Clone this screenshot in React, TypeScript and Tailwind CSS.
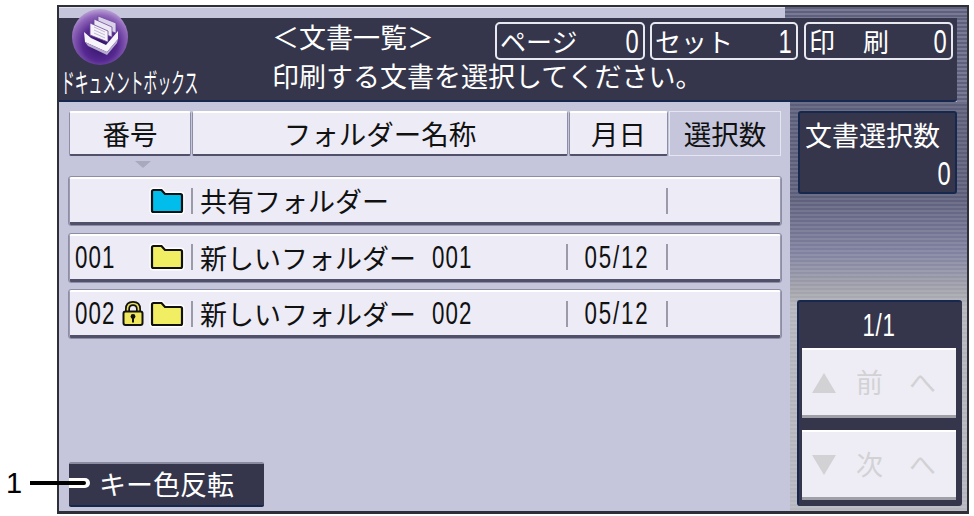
import React from "react";

const jp = "font-['Noto_Sans_CJK_JP','Noto_Sans',sans-serif]";

const BoxIcon = () => (
  <svg width="56" height="56" viewBox="0 0 56 56" className="block">
    <defs>
      <radialGradient id="orb" cx="50%" cy="62%" r="62%">
        <stop offset="0%" stopColor="#2f1266" />
        <stop offset="50%" stopColor="#55288f" />
        <stop offset="82%" stopColor="#8f66ba" />
        <stop offset="100%" stopColor="#bba3d6" />
      </radialGradient>
    </defs>
    <circle cx="28" cy="28" r="28" fill="url(#orb)" />
    <path d="M26 7 L44 14 L44 24 L26 18 Z" fill="#d9d2e8" stroke="#6d4a9c" strokeWidth="0.8" />
    <path d="M22 10 L40 18 L40 28 L22 21 Z" fill="#ece8f4" stroke="#6d4a9c" strokeWidth="0.8" />
    <path d="M18 14 L36 22 L36 33 L18 26 Z" fill="#f6f4fa" stroke="#6d4a9c" strokeWidth="0.8" />
    <path d="M22 18 L33 23 M22 21 L33 26 M22 24 L33 29" stroke="#b5a8cf" strokeWidth="0.8" />
    <path d="M12 23 L19 29 L34 36 L46 22 L46 30 L35 43 L13 33 Z" fill="#f7f5fa" />
    <path d="M13 33 L35 43 L46 30 L45 34 L35 46 L16 37 Z" fill="#b7a9cf" />
  </svg>
);

const Folder = ({ color }: { color: string }) => (
  <svg width="36" height="28" viewBox="0 0 36 28" className="block shrink-0">
    <path d="M2.5 4.5 Q2.5 2.5 4.5 2.5 H12.5 L16 6.5 H31.5 Q33.5 6.5 33.5 8.5 V23.5 Q33.5 25.5 31.5 25.5 H4.5 Q2.5 25.5 2.5 23.5 Z" fill="#fff" stroke="#fff" strokeWidth="4" />
    <path d="M3 4.5 Q3 3 4.5 3 H12.5 L16 7 H31.5 Q33 7 33 8.5 V23.5 Q33 25 31.5 25 H4.5 Q3 25 3 23.5 Z" fill={color} stroke="#111" strokeWidth="2.2" />
  </svg>
);

const Lock = () => (
  <svg width="22" height="25" viewBox="0 0 22 25" className="block">
    <path d="M5.5 11 V8 Q5.5 2.5 11 2.5 Q16.5 2.5 16.5 8 V11" fill="none" stroke="#111" strokeWidth="5" />
    <path d="M5.5 11 V8 Q5.5 2.5 11 2.5 Q16.5 2.5 16.5 8 V11" fill="none" stroke="#e9df55" strokeWidth="1.6" />
    <rect x="1.5" y="10.5" width="19" height="13.5" rx="2" fill="#efe85f" stroke="#111" strokeWidth="2" />
    <circle cx="11" cy="15.5" r="2.4" fill="#111" />
    <rect x="10" y="16" width="2" height="5.5" fill="#111" />
  </svg>
);

const Digits = ({ children, className }: { children: React.ReactNode; className?: string }) => (
  <span className={`inline-block leading-none font-['Liberation_Sans',sans-serif] scale-x-[0.72] ${className ?? ""}`}>{children}</span>
);

const Counter = ({ label, value, w }: { label: React.ReactNode; value: string; w: string }) => (
  <div className={`${w} h-[38px] flex items-center justify-between border-2 border-[#e8e8f0] rounded-[5px] pl-[3px] pr-[2px] text-white text-[26px] leading-none`}>
    {label}
    <Digits className="text-[33px]">{value}</Digits>
  </div>
);

const HeadCell = ({ w, children }: { w: string; children: React.ReactNode }) => (
  <div className={`${w} h-[45px] flex items-center justify-center bg-[#ecebf6] border-t-2 border-t-white border-b-2 border-b-[#50506a] border-x border-x-[#8d8da5] rounded-[2px] text-[27.5px] text-[#111]`}>
    {children}
  </div>
);

const Row = ({ num, lock, color, name, date }: { num?: string; lock?: boolean; color: string; name: string; date?: string }) => (
  <div className="w-[712px] h-[48px] flex items-center bg-[#ecebf6] border-t-2 border-t-white border-b-[3px] border-b-[#50506a] border-x border-x-[#9a9ab0] rounded-[2px] text-[#111] outline outline-1 outline-[#8d8da5]">
    <div className="w-[52px] pl-[5px] shrink-0">
      {num && <Digits className="text-[31px] tracking-[1.5px] origin-left">{num}</Digits>}
    </div>
    <div className="w-[27px] shrink-0">{lock && <Lock />}</div>
    <Folder color={color} />
    <div className="w-[2px] h-[26px] bg-[#9a9aa8] ml-[6px] shrink-0" />
    <div className="w-[373px] pl-[7px] shrink-0 flex items-center text-[27px] leading-none whitespace-nowrap">
      {name}
      {num && <Digits className="text-[31px] tracking-[1.5px] ml-[16px] origin-left">{num}</Digits>}
    </div>
    {date ? <div className="w-[2px] h-[26px] bg-[#9a9aa8] shrink-0" /> : <div className="w-[2px] shrink-0" />}
    <div className="w-[98px] text-center shrink-0">{date && <Digits className="text-[31px] tracking-[2.5px]">{date}</Digits>}</div>
    <div className="w-[2px] h-[26px] bg-[#9a9aa8] shrink-0" />
  </div>
);

const PageButton = ({ dir, label }: { dir: "up" | "down"; label: string }) => (
  <div className="w-[154px] h-[70px] flex items-center justify-between pl-[10px] pr-[20px] bg-[#eeedf6] border-t-2 border-t-white border-b-[3px] border-b-[#a0a0a8] text-[#d2d2d4] text-[27px]">
    <svg width="24" height="20" viewBox="0 0 24 20" className="block">
      <path d={dir === "up" ? "M12 0 L24 20 H0 Z" : "M0 0 H24 L12 20 Z"} fill="#d2d2d4" />
    </svg>
    <span className="-ml-[6px]">{label}</span>
    <span>へ</span>
  </div>
);

export default function App() {
  return (
    <div className={`relative w-[974px] h-[516px] bg-white overflow-hidden pl-[57px] pt-[5px] ${jp}`}>
      <div className="w-[912px] h-[509px] border-2 border-[#2f2f38] border-b-[3px] bg-[#c5c5dc] flex flex-col">
        {/* top strip */}
        <div className="h-[11px] flex shrink-0">
          <div className="w-[726px] border-t border-t-[#e0e0ee]" />
          <div className="flex-1 bg-[repeating-linear-gradient(180deg,#5f617c_0px,#5f617c_2px,#797b96_2px,#797b96_4px)]" />
        </div>

        {/* header */}
        <div className="h-[84px] flex shrink-0">
          <div className="w-[898px] bg-[#35364b] border-b-2 border-b-[#17284f] rounded-br-[3px] relative flex">
            <div className="w-[213px] shrink-0 flex flex-col items-start pl-[13px]">
              <div className="-mt-[9px]"><BoxIcon /></div>
              <span className="text-white text-[27px] leading-none mt-[3px] whitespace-nowrap inline-block origin-left scale-x-[0.51] ml-[-11px]">ドキュメントボックス</span>
            </div>
            <div className="w-[222px] shrink-0 pt-[2px] text-white whitespace-nowrap">
              <div className="text-[27px] leading-[34px]">＜文書一覧＞</div>
              <div className="text-[27px] leading-[36px] mt-[4px]">印刷する文書を選択してください。</div>
            </div>
            <div className="flex gap-[5px] pt-[4px] ml-[1px]">
              <Counter w="w-[150px]" label={<span>ページ</span>} value="0" />
              <Counter w="w-[148px] mr-[1px]" label={<span>セット</span>} value="1" />
              <Counter w="w-[149px]" label={<span className="tracking-[28px] whitespace-nowrap">印刷</span>} value="0" />
            </div>
          </div>
          <div className="flex-1 bg-[repeating-linear-gradient(180deg,#5f617c_0px,#5f617c_2px,#797b96_2px,#797b96_4px)]" />
        </div>

        {/* body */}
        <div className="flex-1 flex min-h-0">
          <div className="w-[731px] shrink-0 pl-[10px] pt-[9px] flex flex-col">
            <div className="flex gap-[1px]">
              <HeadCell w="w-[122px]">番号</HeadCell>
              <HeadCell w="w-[376px]">フォルダー名称</HeadCell>
              <HeadCell w="w-[99px]">月日</HeadCell>
              <div className="w-[112px] h-[45px] flex items-center justify-center bg-[#c5c5dc] border border-[#e6e6f0] text-[27.5px] text-[#111]">選択数</div>
            </div>
            <div className="h-[21px] flex pl-[66px] pt-[5px]">
              <div className="w-0 h-0 border-x-[8px] border-x-transparent border-t-[7px] border-t-[#a9a9bd]" />
            </div>
            <div className="flex flex-col gap-[8.5px]">
              <Row color="#00bdec" name="共有フォルダー" />
              <Row num="001" color="#f1ee64" name="新しいフォルダー" date="05/12" />
              <Row num="002" lock color="#f1ee64" name="新しいフォルダー" date="05/12" />
            </div>
            <div className="mt-auto mb-[4px] w-[195px] h-[45px] flex items-center justify-center bg-[#35364b] border-t-2 border-t-[#8a8aa0] border-b-2 border-b-[#17284f] rounded-[2px] text-white text-[27px]">
              キー色反転
            </div>
          </div>

          <div className="flex-1 flex flex-col min-w-0 bg-[repeating-linear-gradient(180deg,rgba(255,255,255,0.1)_0px,rgba(255,255,255,0.1)_2px,transparent_2px,transparent_4px),linear-gradient(180deg,#5c5e7a_0px,#5c5e7a_95px,#7f819f_150px,#a3a3ab_190px,#b4b4bc_205px,#b6b6c0_100%)]">
            <div className="ml-[8px] mt-[9px] w-[159px] h-[83px] shrink-0 bg-[#35364b] border-2 border-[#17284f] rounded-[3px] text-white text-[27px] leading-none pl-[5px] pt-[8px]">
              <div className="whitespace-nowrap">文書選択数</div>
              <div className="text-right pr-[2px] mt-[9px]"><Digits className="text-[33px]">0</Digits></div>
            </div>
            <div className="mt-auto mb-[5px] ml-[7px] w-[165px] h-[206px] shrink-0 bg-[#35364b] border-t-2 border-t-[#17284f] border-l-2 border-l-[#17284f] rounded-[3px] pl-[3px] flex flex-col items-start">
              <div className="w-[154px] h-[46px] flex items-center justify-center text-white">
                <Digits className="text-[31px] tracking-[1px]">1/1</Digits>
              </div>
              <PageButton dir="up" label="前" />
              <div className="h-[12px]" />
              <PageButton dir="down" label="次" />
            </div>
          </div>
        </div>
      </div>

      {/* callout */}
      <span className="absolute left-[6px] top-[466px] text-[29px] leading-[34px] font-['Liberation_Sans',sans-serif] text-black">1</span>
      <div className="absolute left-[69px] top-[478px] w-[21px] h-[10px] bg-white rounded-r-full" />
      <div className="absolute left-[30px] top-[481px] w-[56px] h-[4px] bg-black rounded-r-full" />
    </div>
  );
}
